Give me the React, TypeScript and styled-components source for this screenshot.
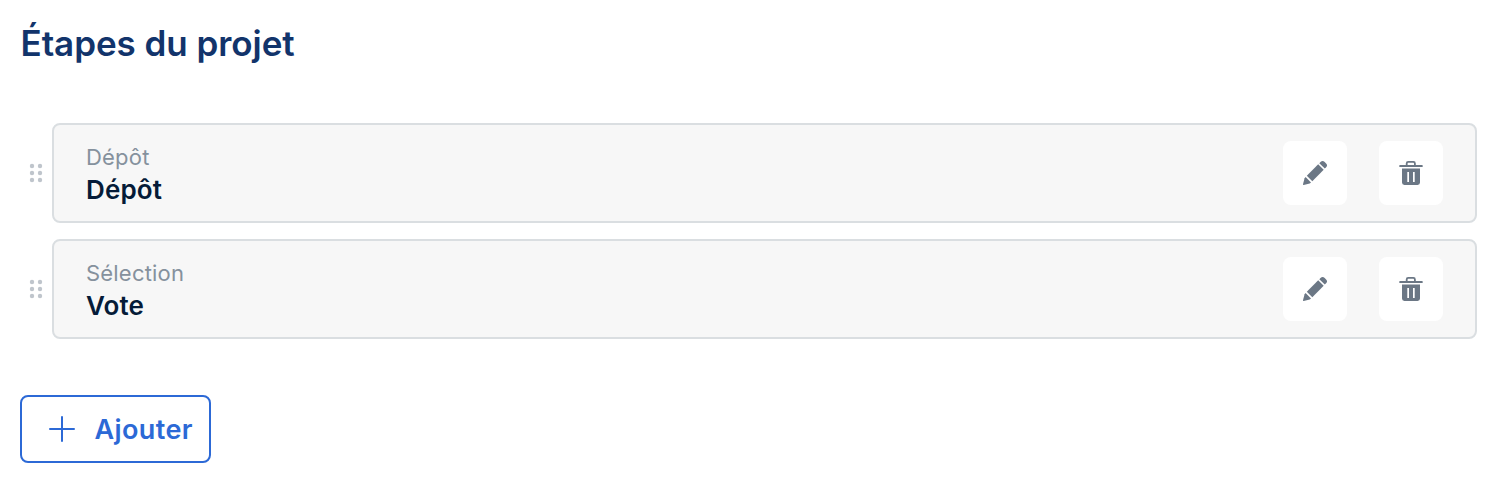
import { ReactNode } from "react";
import styled, { createGlobalStyle } from "styled-components";

type Step = {
  id: string;
  type: string;
  title: string;
};

const steps: Step[] = [
  { id: "deposit", type: "Dépôt", title: "Dépôt" },
  { id: "selection", type: "Sélection", title: "Vote" },
];

function App() {
  return (
    <>
      <GlobalStyle />
      <Section>
        <Title>Étapes du projet</Title>
        <StepList>
          {steps.map((step) => (
            <StepRow key={step.id} step={step} />
          ))}
        </StepList>
        <AddButton type="button">
          <PlusIcon />
          <span>Ajouter</span>
        </AddButton>
      </Section>
    </>
  );
}

function StepRow(props: { step: Step }) {
  return (
    <StyledStepRow>
      <DragHandle />
      <Card>
        <Labels>
          <StepType>{props.step.type}</StepType>
          <StepTitle>{props.step.title}</StepTitle>
        </Labels>
        <IconButton label="Modifier">
          <PencilIcon />
        </IconButton>
        <IconButton label="Supprimer">
          <TrashIcon />
        </IconButton>
      </Card>
    </StyledStepRow>
  );
}

function IconButton(props: { label: string; children: ReactNode }) {
  return (
    <StyledIconButton type="button" aria-label={props.label}>
      {props.children}
    </StyledIconButton>
  );
}

function DragHandle() {
  return (
    <StyledDragHandle viewBox="0 0 32 32" width="32" height="32">
      {[9, 16, 23].map((y) => (
        <g key={y}>
          <circle cx="12" cy={y} r="2.2" />
          <circle cx="20" cy={y} r="2.2" />
        </g>
      ))}
    </StyledDragHandle>
  );
}

function PencilIcon() {
  return (
    <svg viewBox="0 0 24 24" width="24" height="24" fill="currentColor">
      <path d="M16.3 2.2 17.5 1Q19.6-1 21.7 1L23.1 2.4Q25 4.4 23.1 6.3L21.8 7.6Z" />
      <path d="M15.2 3.3 20.7 8.8 9.3 20.2 3.8 14.7Z" />
      <path d="M2.6 16 8 21.4 6.7 22.4.7 24Q-.1 24.1 0 23.3L1.6 17.2Z" />
    </svg>
  );
}

function TrashIcon() {
  return (
    <svg viewBox="0 0 24 24" width="24" height="24" fill="currentColor">
      <path
        fillRule="evenodd"
        d="M6.8 4V2.4Q6.8 0 9.2 0H14.4Q16.8 0 16.8 2.4V4H23.1Q23.7 4 23.7 4.6V5.4Q23.7 6 23.1 6H.9Q.3 6 .3 5.4V4.6Q.3 4 .9 4ZM8.6 4H15V2.5Q15 1.8 14.3 1.8H9.3Q8.6 1.8 8.6 2.5Z"
      />
      <path
        fillRule="evenodd"
        d="M3 7.6H21V21.6Q21 24 18.6 24H5.4Q3 24 3 21.6ZM8.3 10.9V21H10V10.9ZM14 10.9V21H15.7V10.9Z"
      />
    </svg>
  );
}

function PlusIcon() {
  return (
    <svg viewBox="0 0 26 26" width="26" height="26" stroke="currentColor">
      <path d="M13 1V25M1 13H25" strokeWidth="2" strokeLinecap="round" />
    </svg>
  );
}

const GlobalStyle = createGlobalStyle`
  body {
    margin: 0;
    background: #fff;
    font-family: Inter, "Liberation Sans", sans-serif;
    -webkit-font-smoothing: antialiased;
  }
  button {
    font: inherit;
    cursor: pointer;
  }
  svg {
    display: block;
    flex-shrink: 0;
  }
`;

const Section = styled.section`
  padding: 19px 25px 15px 20px;
`;

const Title = styled.h1`
  margin: 0 0 56px;
  padding-left: 0.5px;
  font-size: 35px;
  font-weight: 600;
  line-height: 48px;
  letter-spacing: -0.05px;
  color: #12346b;
`;

const StepList = styled.div`
  display: flex;
  flex-direction: column;
  gap: 16px;
  margin-bottom: 56px;
`;

const StyledStepRow = styled.div`
  display: flex;
  align-items: center;
`;

const StyledDragHandle = styled.svg`
  fill: #bfc5cc;
  cursor: grab;
`;

const Card = styled.div`
  display: flex;
  flex: 1;
  align-items: center;
  gap: 32px;
  box-sizing: border-box;
  height: 100px;
  padding: 0 32px;
  border: 2px solid #dadee1;
  border-radius: 8px;
  background: #f7f7f7;
`;

const Labels = styled.div`
  flex: 1;
`;

const StepType = styled.p`
  margin: 0;
  font-size: 22px;
  line-height: 32px;
  letter-spacing: 0.2px;
  color: #85919d;
`;

const StepTitle = styled.p`
  margin: 0;
  padding-top: 1px;
  font-size: 26px;
  font-weight: 600;
  line-height: 31px;
  letter-spacing: 0.15px;
  color: #051b38;
`;

const StyledIconButton = styled.button`
  display: flex;
  align-items: center;
  justify-content: center;
  width: 64px;
  height: 64px;
  padding: 0;
  border: 0;
  border-radius: 8px;
  background: #fff;
  color: #6b7785;
`;

const AddButton = styled.button`
  display: flex;
  align-items: center;
  gap: 19.5px;
  box-sizing: border-box;
  width: 191px;
  height: 68px;
  padding: 0 0 0 27px;
  border: 2px solid #2c69d6;
  border-radius: 8px;
  background: #fff;
  color: #2c69d6;
  && {
    font-size: 27px;
    font-weight: 600;
    letter-spacing: 0.4px;
  }
`;

export default App;
